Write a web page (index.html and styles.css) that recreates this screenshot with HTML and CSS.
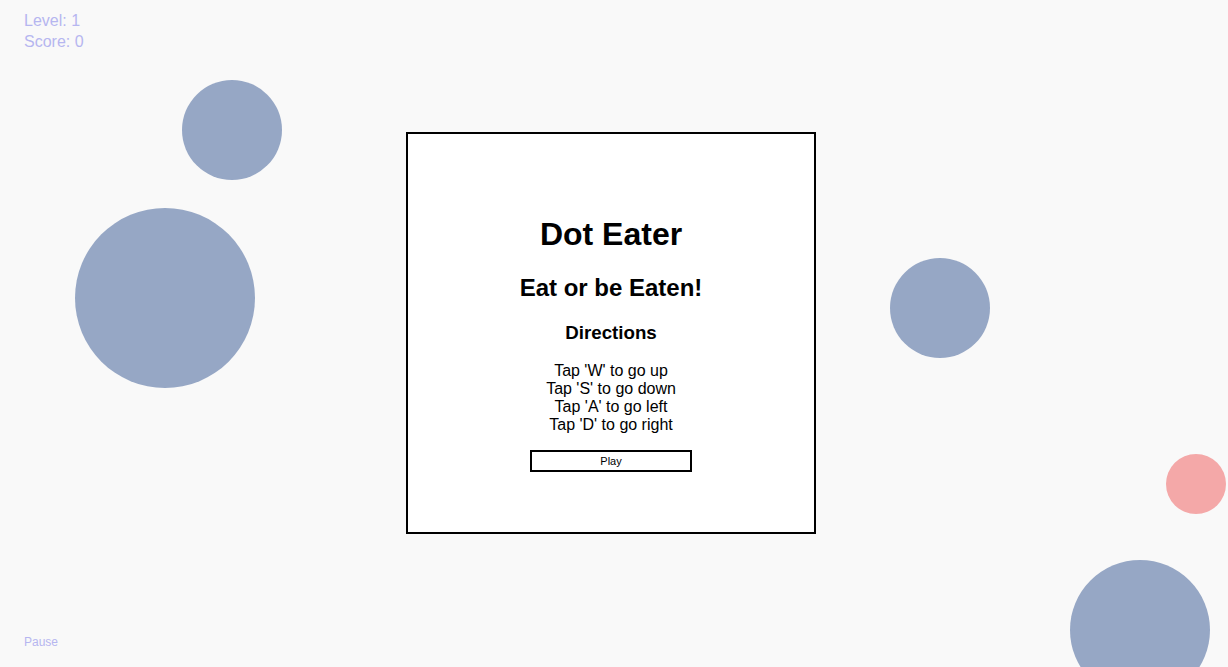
FILE: index.html
```html
<!DOCTYPE html>
<html>
<head>
<meta charset="utf-8">
<link rel="stylesheet" href="styles.css">
</head>
<body>
<div class="stage">
  <div class="hud">
    <div class="hud-line">Level: 1</div>
    <div class="hud-line">Score: 0</div>
  </div>
  <div class="dot dot-blue d1"></div>
  <div class="dot dot-blue d2"></div>
  <div class="dot dot-blue d3"></div>
  <div class="dot dot-pink d4"></div>
  <div class="dot dot-blue d5"></div>
  <div class="modal">
    <h1 class="title">Dot Eater</h1>
    <h2 class="subtitle">Eat or be Eaten!</h2>
    <h3 class="directions-title">Directions</h3>
    <div class="directions">
      <div>Tap 'W' to go up</div>
      <div>Tap 'S' to go down</div>
      <div>Tap 'A' to go left</div>
      <div>Tap 'D' to go right</div>
    </div>
    <button class="play">Play</button>
  </div>
  <div class="pause">Pause</div>
</div>
</body>
</html>
```
FILE: styles.css
```css
html, body {
  margin: 0;
  padding: 0;
  background: #f9f9f9;
  font-family: "Liberation Sans", Arial, sans-serif;
}
.stage {
  position: relative;
  width: 1228px;
  height: 667px;
  overflow: hidden;
  display: flex;
  align-items: center;
  justify-content: center;
  padding-right: 6px;
  padding-bottom: 1px;
  box-sizing: border-box;
}
.hud {
  position: absolute;
  left: 24px;
  top: 10px;
  color: #b6b6f0;
  font-size: 16px;
  line-height: 21px;
}
.pause {
  position: absolute;
  left: 24px;
  top: 635px;
  color: #b6b6f0;
  font-size: 12px;
}
.dot {
  position: absolute;
  border-radius: 50%;
}
.dot-blue { background: #96a7c5; }
.dot-pink { background: #f4a8a8; }
.d1 { left: 182px; top: 80px; width: 100px; height: 100px; }
.d2 { left: 75px; top: 208px; width: 180px; height: 180px; }
.d3 { left: 890px; top: 258px; width: 100px; height: 100px; }
.d4 { left: 1166px; top: 454px; width: 60px; height: 60px; }
.d5 { left: 1070px; top: 560px; width: 140px; height: 140px; }
.modal {
  position: relative;
  width: 410px;
  height: 402px;
  box-sizing: border-box;
  border: 2px solid #000;
  background: #fff;
  display: flex;
  flex-direction: column;
  align-items: center;
  padding-top: 82px;
  color: #000;
}
.title {
  margin: 0;
  font-size: 32px;
  line-height: 37px;
  font-weight: bold;
}
.subtitle {
  margin: 21px 0 0;
  font-size: 24px;
  line-height: 28px;
  font-weight: bold;
}
.directions-title {
  margin: 20px 0 0;
  font-size: 18.72px;
  line-height: 21px;
  font-weight: bold;
}
.directions {
  margin-top: 19px;
  font-size: 16px;
  line-height: 18px;
  text-align: center;
}
.play {
  margin-top: 16px;
  width: 162px;
  height: 22px;
  box-sizing: border-box;
  border: 2px solid #000;
  background: #fff;
  font-family: "Liberation Sans", Arial, sans-serif;
  font-size: 11px;
  padding: 0;
  color: #000;
}
```
